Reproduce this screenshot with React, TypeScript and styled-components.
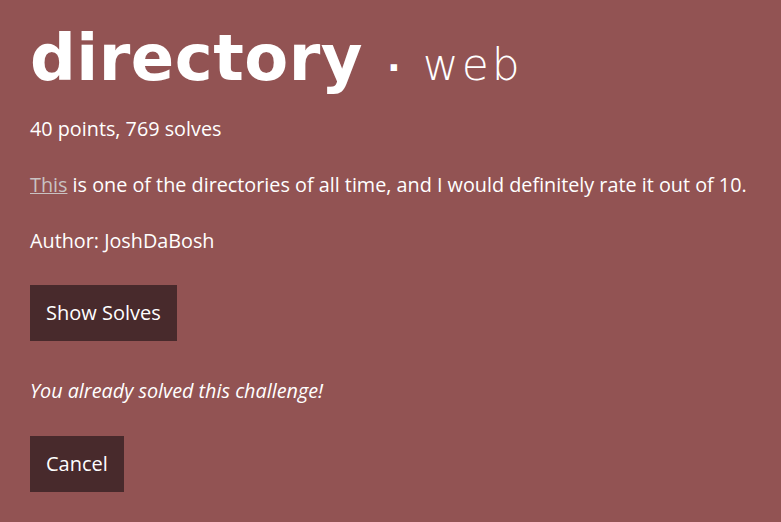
import styled, { createGlobalStyle } from "styled-components";

const GlobalStyle = createGlobalStyle`
    html, body {
        margin: 0;
        background: #925353;
    }
    body {
        font-family: "Open Sans", "Noto Sans", sans-serif;
        color: #ffffff;
    }
`

export default function App() {
    return (
        <>
            <GlobalStyle/>
            <Page>
                <TitleRow>
                    <ChallengeName>directory</ChallengeName>
                    <Dot>·</Dot>
                    <Category>web</Category>
                </TitleRow>
                <Line>40 points, 769 solves</Line>
                <Line>
                    <SourceLink href="#">This</SourceLink> is one of the directories of all time, and I would
                    definitely rate it out of 10.
                </Line>
                <Line>Author: JoshDaBosh</Line>
                <Button>Show Solves</Button>
                <Solved>You already solved this challenge!</Solved>
                <Button>Cancel</Button>
            </Page>
        </>
    )
}

const Page = styled.div`
    display: flex;
    flex-direction: column;
    align-items: flex-start;
    padding: 26px 12px 30px 30px;
    min-height: 522px;
    box-sizing: border-box;
`
const TitleRow = styled.div`
    display: flex;
    align-items: baseline;
    height: 64px;
    margin-bottom: 27px;
`
const ChallengeName = styled.h1`
    margin: 0;
    font-family: "DejaVu Sans", sans-serif;
    font-weight: 700;
    font-size: 64px;
    line-height: 1;
    letter-spacing: 0.5px;
`
const Dot = styled.span`
    margin: 0 22px 0 24px;
    font-family: "DejaVu Sans", sans-serif;
    font-size: 36px;
    font-weight: 700;
`
const Category = styled.span`
    font-family: "DejaVu Sans", sans-serif;
    font-size: 44px;
    font-weight: 200;
    letter-spacing: 3px;
`
const Line = styled.p`
    margin: 0 0 32px;
    font-size: 19.8px;
    line-height: 24px;
    white-space: nowrap;
`
const SourceLink = styled.a`
    color: #c9c2c2;
    text-decoration: underline;
`
const Button = styled.button`
    background: #482a2c;
    color: #ffffff;
    border: none;
    border-radius: 0;
    padding: 16px;
    font-family: "Open Sans", "Noto Sans", sans-serif;
    font-size: 20px;
    line-height: 24px;
`
const Solved = styled(Line)`
    font-style: italic;
    margin: 38px 0 33px;
`
